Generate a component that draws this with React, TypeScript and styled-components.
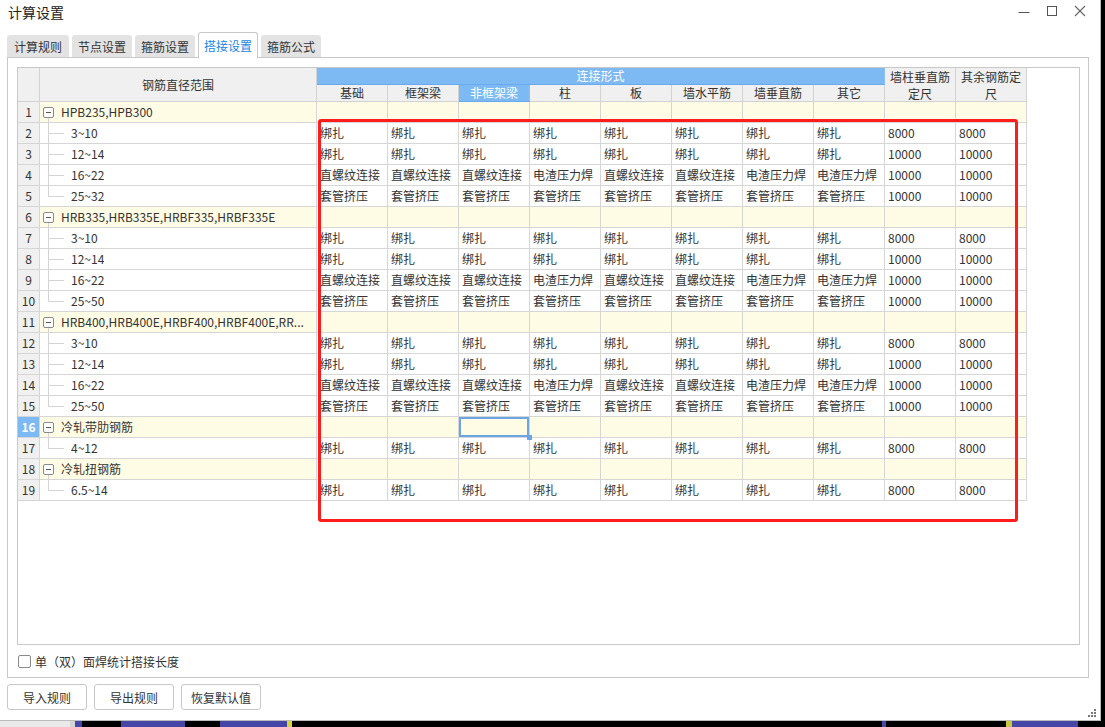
import { FC } from "react";
import styled, { createGlobalStyle, css } from "styled-components";

const GlobalStyle = createGlobalStyle`
  html, body {
    margin: 0;
    padding: 0;
    background: #000;
  }
  body {
    font-family: "Noto Sans CJK SC", "Noto Sans", sans-serif;
    font-size: 12px;
    color: #333;
  }
`;

type Child = { label: string; values: string[] };
type Group = { name: string; children: Child[] };

const A = ["绑扎", "绑扎", "绑扎", "绑扎", "绑扎", "绑扎", "绑扎", "绑扎", "8000", "8000"];
const B = ["绑扎", "绑扎", "绑扎", "绑扎", "绑扎", "绑扎", "绑扎", "绑扎", "10000", "10000"];
const C = ["直螺纹连接", "直螺纹连接", "直螺纹连接", "电渣压力焊", "直螺纹连接", "直螺纹连接", "电渣压力焊", "电渣压力焊", "10000", "10000"];
const D = ["套管挤压", "套管挤压", "套管挤压", "套管挤压", "套管挤压", "套管挤压", "套管挤压", "套管挤压", "10000", "10000"];

const groups: Group[] = [
  { name: "HPB235,HPB300", children: [{ label: "3~10", values: A }, { label: "12~14", values: B }, { label: "16~22", values: C }, { label: "25~32", values: D }] },
  { name: "HRB335,HRB335E,HRBF335,HRBF335E", children: [{ label: "3~10", values: A }, { label: "12~14", values: B }, { label: "16~22", values: C }, { label: "25~50", values: D }] },
  { name: "HRB400,HRB400E,HRBF400,HRBF400E,RR...", children: [{ label: "3~10", values: A }, { label: "12~14", values: B }, { label: "16~22", values: C }, { label: "25~50", values: D }] },
  { name: "冷轧带肋钢筋", children: [{ label: "4~12", values: A }] },
  { name: "冷轧扭钢筋", children: [{ label: "6.5~14", values: A }] },
];

const subHeaders = ["基础", "框架梁", "非框架梁", "柱", "板", "墙水平筋", "墙垂直筋", "其它"];
const tabs = ["计算规则", "节点设置", "箍筋设置", "搭接设置", "箍筋公式"];
const taskbar: [number, string][] = [
  [70, "#e9e9e9"], [5, "#d4d4d4"], [7, "#4646a6"], [39, "#000"], [64, "#4646a6"], [35, "#000"],
  [67, "#4646a6"], [5, "#d6d63a"], [590, "#000"], [4, "#4646a6"], [120, "#000"], [6, "#c8c83a"],
  [66, "#4646a6"], [27, "#000"],
];

const SELECTED_ROW = 16;
const SELECTED_COL = 2;

const App: FC = () => {
  let rowNo = 0;
  const rows: JSX.Element[] = [];
  groups.forEach((g) => {
    rowNo++;
    const gNo = rowNo;
    const sel = gNo === SELECTED_ROW;
    rows.push(
      <NumCell key={`n${gNo}`} $selected={sel}>{gNo}</NumCell>,
      <TreeCell key={`t${gNo}`} $kind="group">
        <Toggle />
        <TreeText>{g.name}</TreeText>
      </TreeCell>,
      ...Array.from({ length: 10 }, (_, ci) => (
        <DataCell key={`d${gNo}-${ci}`} $group $active={sel && ci === SELECTED_COL} />
      ))
    );
    g.children.forEach((c, ci) => {
      rowNo++;
      const no = rowNo;
      rows.push(
        <NumCell key={`n${no}`}>{no}</NumCell>,
        <TreeCell key={`t${no}`} $kind="child" $last={ci === g.children.length - 1}>
          <TreeText>{c.label}</TreeText>
        </TreeCell>,
        ...c.values.map((v, vi) => <DataCell key={`d${no}-${vi}`}>{v}</DataCell>)
      );
    });
  });

  return (
    <>
      <GlobalStyle />
      <Screen>
        <TopArea>
          <Window>
            <TitleBar>
              <Title>计算设置</Title>
              <Controls>
                <CtrlButton>
                  <svg width="12" height="12" viewBox="0 0 12 12">
                    <path d="M0.5 7.5h11" stroke="#555" strokeWidth="1" />
                  </svg>
                </CtrlButton>
                <CtrlButton>
                  <svg width="12" height="12" viewBox="0 0 12 12">
                    <rect x="1.5" y="1.5" width="9" height="9" fill="none" stroke="#555" strokeWidth="1" />
                  </svg>
                </CtrlButton>
                <CtrlButton>
                  <svg width="12" height="12" viewBox="0 0 12 12">
                    <path d="M1 1L11 11M11 1L1 11" stroke="#666" strokeWidth="1.1" />
                  </svg>
                </CtrlButton>
              </Controls>
            </TitleBar>

            <TabStrip>
              {tabs.map((t, i) => (
                <Tab key={t} $active={i === 3} $wide={i === 0}>{t}</Tab>
              ))}
            </TabStrip>

            <Panel>
              <GridBox>
                <Table>
                  <HeadCell $area="1 / 1 / 3 / 2" />
                  <HeadCell $area="1 / 2 / 3 / 3">钢筋直径范围</HeadCell>
                  <HeadCell $area="1 / 3 / 2 / 11" $blue>连接形式</HeadCell>
                  <HeadCell $area="1 / 11 / 3 / 12" $wrap>墙柱垂直筋定尺</HeadCell>
                  <HeadCell $area="1 / 12 / 3 / 13" $wrap>其余钢筋定尺</HeadCell>
                  {subHeaders.map((h, i) => (
                    <HeadCell key={h} $area={`2 / ${i + 3} / 3 / ${i + 4}`} $blue={i === SELECTED_COL}>
                      {h}
                    </HeadCell>
                  ))}
                  {rows}
                </Table>
              </GridBox>
              <CheckRow>
                <CheckBox />
                <span>单（双）面焊统计搭接长度</span>
              </CheckRow>
            </Panel>

            <ButtonRow>
              <Button>导入规则</Button>
              <Button>导出规则</Button>
              <Button>恢复默认值</Button>
            </ButtonRow>

            <Grip>
              <svg width="10" height="10" viewBox="0 0 10 10">
                <rect x="7" y="1" width="2" height="2" fill="#777" />
                <rect x="4" y="4" width="2" height="2" fill="#777" />
                <rect x="7" y="4" width="2" height="2" fill="#777" />
                <rect x="1" y="7" width="2" height="2" fill="#777" />
                <rect x="4" y="7" width="2" height="2" fill="#777" />
                <rect x="7" y="7" width="2" height="2" fill="#777" />
              </svg>
            </Grip>

            <RedMark />
          </Window>
          <RightStrip />
        </TopArea>
        <Taskbar>
          {taskbar.map(([w, c], i) => (
            <TaskSeg key={i} style={{ width: w, background: c }} />
          ))}
        </Taskbar>
      </Screen>
    </>
  );
};

export default App;

const Screen = styled.div`
  width: 1105px;
  height: 727px;
  overflow: hidden;
  display: flex;
  flex-direction: column;
  background: #000;
`;

const TopArea = styled.div`
  display: flex;
  height: 721px;
`;

const Window = styled.div`
  position: relative;
  width: 1100px;
  height: 720px;
  background: #fff;
  border-right: 1px solid #bcbcbc;
  border-bottom: 1px solid #bcbcbc;
  display: flex;
  flex-direction: column;
`;

const RightStrip = styled.div`
  flex: 1;
  background: #000;
`;

const Taskbar = styled.div`
  display: flex;
  height: 6px;
`;

const TaskSeg = styled.div`
  flex: none;
  height: 100%;
`;

const TitleBar = styled.div`
  height: 31px;
  display: flex;
  align-items: flex-start;
  justify-content: space-between;
  padding: 0 14px 0 8px;
`;

const Title = styled.div`
  font-size: 14px;
  line-height: 24px;
  color: #222;
`;

const Controls = styled.div`
  display: flex;
  gap: 16px;
  padding-top: 5px;
`;

const CtrlButton = styled.div`
  width: 12px;
  height: 12px;
  display: flex;
`;

const TabStrip = styled.div`
  height: 26px;
  display: flex;
  align-items: flex-end;
  gap: 3px;
  padding-left: 7px;
  position: relative;
  z-index: 1;
`;

const Tab = styled.div<{ $active?: boolean; $wide?: boolean }>`
  width: ${(p) => (p.$wide ? 62 : 60)}px;
  height: 22px;
  box-sizing: border-box;
  display: flex;
  align-items: center;
  justify-content: center;
  background: #e3e3e3;
  border-radius: 3px 3px 0 0;
  font-size: 12px;
  color: #333;
  ${(p) =>
    p.$active &&
    css`
      height: 26px;
      margin-bottom: -1px;
      background: #fff;
      border: 1px solid #c8c8c8;
      border-bottom: none;
      color: #1c86e2;
      padding-bottom: 1px;
    `}
`;

const Panel = styled.div`
  width: 1082px;
  height: 621px;
  margin-left: 7px;
  box-sizing: border-box;
  border: 1px solid #c8c8c8;
  padding: 9px 0 0 9px;
  display: flex;
  flex-direction: column;
`;

const GridBox = styled.div`
  width: 1063px;
  height: 578px;
  box-sizing: border-box;
  border: 1px solid #c8c8c8;
  overflow: hidden;
`;

const Table = styled.div`
  display: grid;
  grid-template-columns: 22px 277px repeat(10, 71px);
  grid-template-rows: 17px 17px;
  grid-auto-rows: 21px;
  line-height: 16px;
`;

const cellBase = css`
  box-sizing: border-box;
  border-right: 1px solid #d6d6d6;
  border-bottom: 1px solid #d6d6d6;
  white-space: nowrap;
  overflow: hidden;
`;

const HeadCell = styled.div<{ $area: string; $blue?: boolean; $wrap?: boolean }>`
  ${cellBase};
  grid-area: ${(p) => p.$area};
  background: #f0f0f0;
  border-color: #d2d2d2;
  display: flex;
  align-items: center;
  justify-content: center;
  text-align: center;
  color: #333;
  ${(p) =>
    p.$blue &&
    css`
      background: #7db9f3;
      color: #fff;
      border-bottom-color: #6aa9ec;
      border-right-color: #8cc0f2;
    `}
  ${(p) =>
    p.$wrap &&
    css`
      white-space: normal;
      line-height: 17px;
      padding: 0 1px;
    `}
`;

const NumCell = styled.div<{ $selected?: boolean }>`
  ${cellBase};
  background: #f0f0f0;
  display: flex;
  align-items: center;
  justify-content: center;
  color: #333;
  ${(p) =>
    p.$selected &&
    css`
      background: #7db9f3;
      color: #fff;
      font-weight: bold;
    `}
`;

const TreeCell = styled.div<{ $kind: "group" | "child"; $last?: boolean }>`
  ${cellBase};
  position: relative;
  display: flex;
  align-items: center;
  background: ${(p) => (p.$kind === "group" ? "#fffce6" : "#fff")};
  padding-left: ${(p) => (p.$kind === "group" ? 2 : 31)}px;
  gap: 7px;

  ${(p) =>
    p.$kind === "group"
      ? css`
          &::before {
            content: "";
            position: absolute;
            left: 8px;
            top: 16px;
            bottom: -1px;
            border-left: 1px solid #d4d4d4;
          }
        `
      : css`
          &::before {
            content: "";
            position: absolute;
            left: 8px;
            top: -1px;
            height: ${p.$last ? "11px" : "calc(100% + 1px)"};
            border-left: 1px solid #d4d4d4;
          }
          &::after {
            content: "";
            position: absolute;
            left: 8px;
            top: 10px;
            width: 16px;
            border-top: 1px solid #d4d4d4;
          }
        `}
`;

const Toggle = styled.div`
  position: relative;
  width: 11px;
  height: 11px;
  flex: none;
  margin-left: 1px;
  box-sizing: border-box;
  border: 1px solid #8a8a8a;
  border-radius: 2px;
  background: #fff;

  &::after {
    content: "";
    position: absolute;
    left: 2px;
    top: 4px;
    width: 5px;
    border-top: 1px solid #555;
  }
`;

const TreeText = styled.span`
  overflow: hidden;
  text-overflow: ellipsis;
  color: #333;
  font-size: 12px;
`;

const DataCell = styled.div<{ $group?: boolean; $active?: boolean }>`
  ${cellBase};
  position: relative;
  display: flex;
  align-items: center;
  padding-left: 3px;
  background: ${(p) => (p.$group ? "#fffce6" : "#fff")};
  color: #333;
  overflow: visible;
  ${(p) =>
    p.$active &&
    css`
      box-shadow: inset 0 0 0 2px #6aa6e6;
      &::after {
        content: "";
        position: absolute;
        right: -3px;
        bottom: -3px;
        width: 5px;
        height: 5px;
        background: #6aa6e6;
        z-index: 1;
      }
    `}
`;

const CheckRow = styled.div`
  flex: 1;
  display: flex;
  align-items: center;
  gap: 4px;
  padding-left: 1px;
  font-size: 12px;
  color: #333;
`;

const CheckBox = styled.div`
  width: 13px;
  height: 13px;
  box-sizing: border-box;
  border: 1px solid #8a8a8a;
  border-radius: 2px;
  background: #fff;
`;

const ButtonRow = styled.div`
  display: flex;
  gap: 7px;
  padding: 6px 0 0 7px;
`;

const Button = styled.div`
  width: 80px;
  height: 26px;
  box-sizing: border-box;
  border: 1px solid #c8c8c8;
  border-radius: 3px;
  background: #fff;
  display: flex;
  align-items: center;
  justify-content: center;
  font-size: 12px;
  color: #333;
`;

const Grip = styled.div`
  position: absolute;
  right: 3px;
  bottom: 2px;
  width: 10px;
  height: 10px;
  display: flex;
`;

const RedMark = styled.div`
  position: absolute;
  left: 318px;
  top: 119px;
  width: 700px;
  height: 403px;
  box-sizing: border-box;
  border: 3px solid #ff1c1c;
  border-radius: 3px;
  pointer-events: none;
`;
